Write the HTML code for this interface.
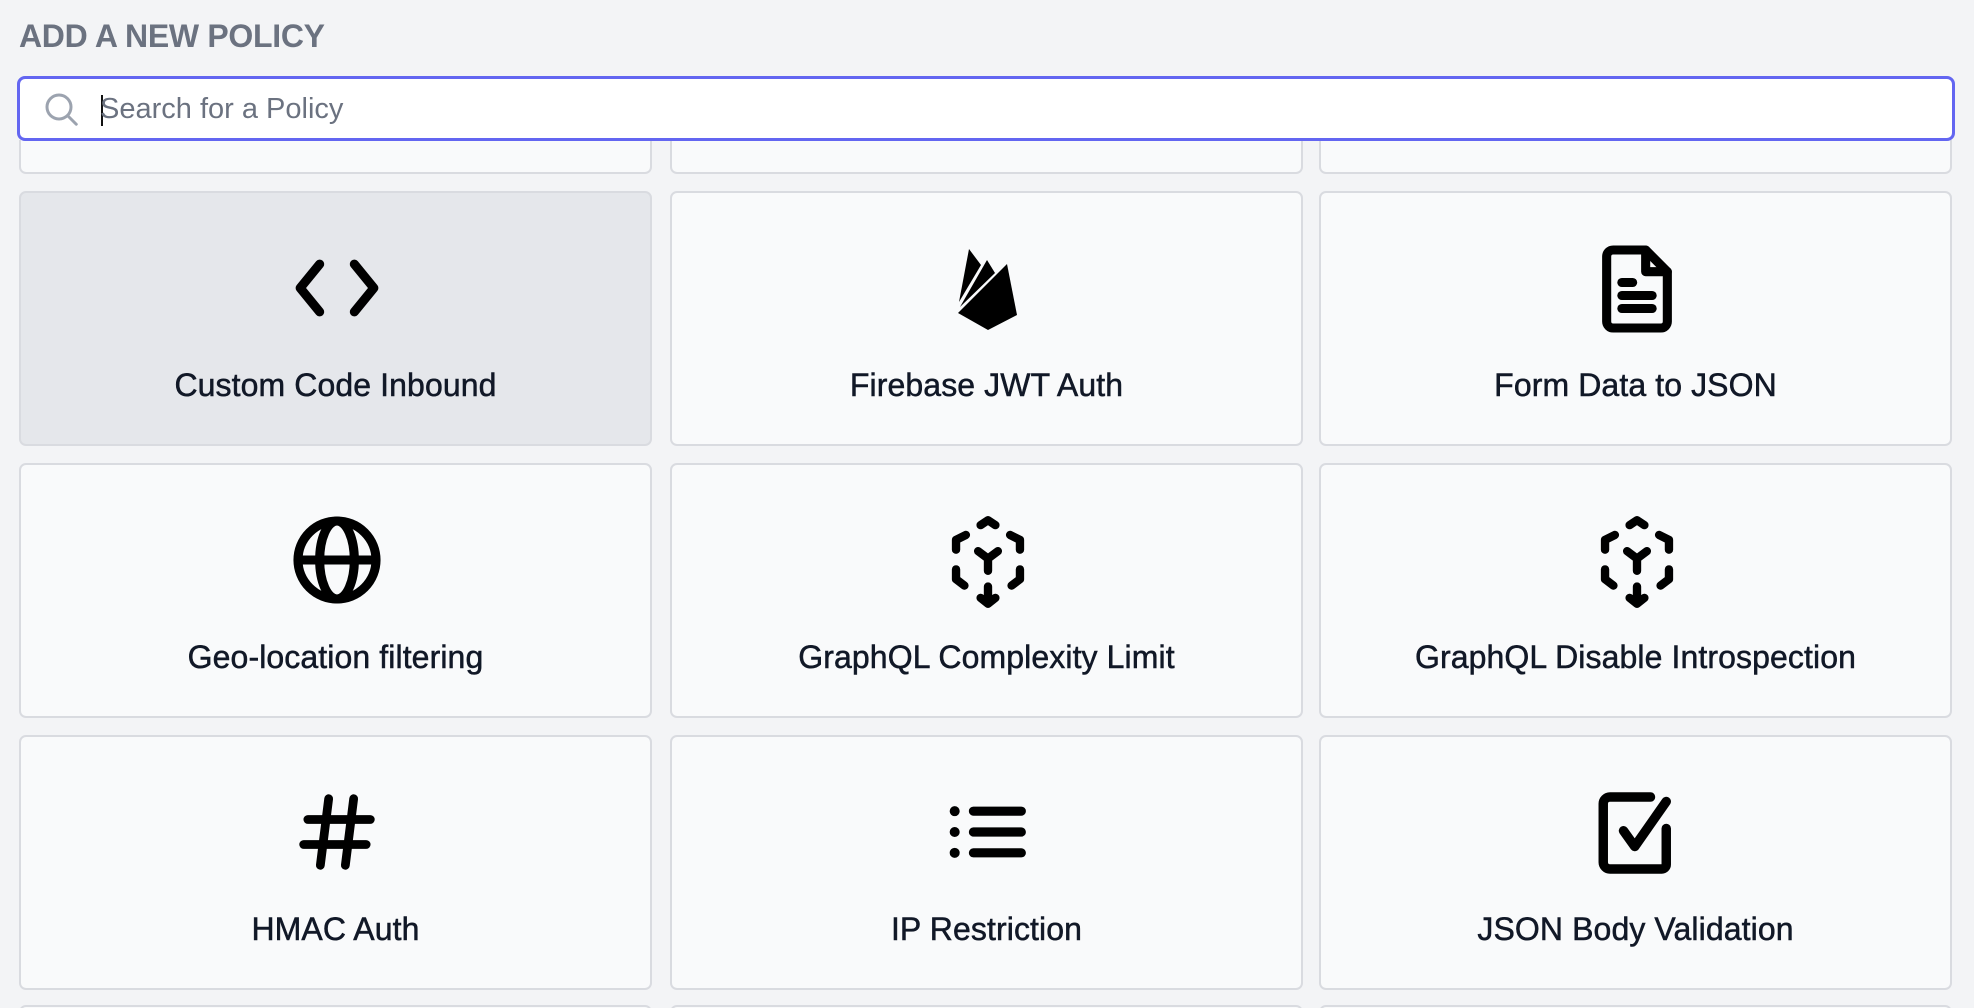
<!DOCTYPE html>
<html><head><meta charset="utf-8"><style>
*{box-sizing:border-box;margin:0;padding:0}
html,body{width:1974px;height:1008px;overflow:hidden}
body{background:#f3f4f6;font-family:"Liberation Sans",sans-serif;position:relative}
h1{position:absolute;left:19px;top:18px;font-size:32px;font-weight:700;color:#6b7280;letter-spacing:-0.3px;line-height:36px}
.list{position:absolute;left:0;top:140px;width:1974px;height:868px;overflow:hidden}
.card{position:absolute;width:633px;height:255px;background:#f9fafb;border:2px solid #d9dbe0;border-radius:7px}
.card.h{background:#e5e7eb}
.card svg{position:absolute;left:266px;top:45px;width:100px;height:100px;fill:none;stroke:#000;stroke-width:2.1;stroke-linecap:round;stroke-linejoin:round}
.card .l{position:absolute;left:0;right:0;top:174px;text-align:center;font-size:32px;color:#111827;letter-spacing:0.1px;-webkit-text-stroke:0.5px #111827}
.search{position:absolute;left:17px;top:76px;width:1938px;height:65px;background:#fff;border:3px solid #6366f1;border-radius:8px;z-index:2}
.search .ph{position:absolute;left:80px;top:14px;font-size:29px;color:#6b7280}
.search .cur{position:absolute;left:81px;top:16px;width:2px;height:31px;background:#111}
</style></head><body>
<h1>ADD A NEW POLICY</h1>
<div class="search">
<svg style="position:absolute;left:24px;top:13px" width="36" height="36" viewBox="0 0 24 24" fill="none" stroke="#9ca3af" stroke-width="2" stroke-linecap="round"><circle cx="10" cy="10" r="8"/><path d="M16 16l5.5 5.5"/></svg>
<div class="cur"></div><div class="ph">Search for a Policy</div></div>

<div class="list">
<div class="card" style="left:19px;top:-221px"></div>
<div class="card" style="left:670px;top:-221px"></div>
<div class="card" style="left:1319px;top:-221px"></div>

<div class="card h" style="left:19px;top:51px"><svg viewBox="0 0 24 24" style="width:104px;height:104px;left:264px;top:43px"><path d="M8 6.5L3.5 12L8 17.5M16 6.5L20.5 12L16 17.5"/></svg><div class="l">Custom Code Inbound</div></div>
<div class="card" style="left:670px;top:51px"><svg viewBox="0 0 100 100" style="stroke:none;fill:#000"><path d="M21 64L31 11L43 27Z"/><path d="M22 69L49 22L57 35Z"/><path d="M20 75L69 26L79 77L50 92Z"/></svg><div class="l">Firebase JWT Auth</div></div>
<div class="card" style="left:1319px;top:51px"><svg viewBox="0 0 24 24" style="width:104px;height:104px;left:264px;top:44px"><path d="M6.5 3H14L19 8V19.5A1.5 1.5 0 0 1 17.5 21H6.5A1.5 1.5 0 0 1 5 19.5V4.5A1.5 1.5 0 0 1 6.5 3Z"/><path d="M14 3V8H19M8.5 10.5H11M8.5 13.5H15.5M8.5 16.5H15.5"/></svg><div class="l">Form Data to JSON</div></div>

<div class="card" style="left:19px;top:323px"><svg viewBox="0 0 24 24" style="width:104px;height:104px;left:264px;top:43px"><circle cx="12" cy="12" r="9"/><ellipse cx="12" cy="12" rx="4" ry="9"/><path d="M3 12H21"/></svg><div class="l">Geo-location filtering</div></div>
<div class="card" style="left:670px;top:323px"><svg viewBox="0 0 24 24" style="width:118px;height:118px;left:257px;top:38px;stroke-width:1.7"><path d="M10.5 4.5L12 3.5L13.5 4.5M16.5 6.5L18.5 7.5V9.5M18.5 13.5V15.5L16.8 16.8M5.5 9.5V7.5L7.5 6.5M5.5 13.5V15.5L7.2 16.8M12 17V20.5M10.5 19.3L12 20.5L13.5 19.3M10 9.8L12 11.3L14 9.8M12 11.3V13.8"/></svg><div class="l">GraphQL Complexity Limit</div></div>
<div class="card" style="left:1319px;top:323px"><svg viewBox="0 0 24 24" style="width:118px;height:118px;left:257px;top:38px;stroke-width:1.7"><path d="M10.5 4.5L12 3.5L13.5 4.5M16.5 6.5L18.5 7.5V9.5M18.5 13.5V15.5L16.8 16.8M5.5 9.5V7.5L7.5 6.5M5.5 13.5V15.5L7.2 16.8M12 17V20.5M10.5 19.3L12 20.5L13.5 19.3M10 9.8L12 11.3L14 9.8M12 11.3V13.8"/></svg><div class="l">GraphQL Disable Introspection</div></div>

<div class="card" style="left:19px;top:595px"><svg viewBox="0 0 24 24"><path d="M5 9H20M4 15H19M10 4L8 20M16 4L14 20"/></svg><div class="l">HMAC Auth</div></div>
<div class="card" style="left:670px;top:595px"><svg viewBox="0 0 24 24"><path d="M8.5 7H20M8.5 12H20M8.5 17H20" stroke-width="2.2"/><path d="M4 7H4.01M4 12H4.01M4 17H4.01" stroke-width="2.4"/></svg><div class="l">IP Restriction</div></div>
<div class="card" style="left:1319px;top:595px"><svg viewBox="0 0 24 24" style="width:108px;height:108px;left:262px;top:42px"><path d="M15 4H6A1.5 1.5 0 0 0 4.5 5.5V18.5A1.5 1.5 0 0 0 6 20H17.5A1 1 0 0 0 18.5 19V11"/><path d="M9 11.5L11.5 15L18.5 5"/></svg><div class="l">JSON Body Validation</div></div>

<div class="card" style="left:19px;top:865px"></div>
<div class="card" style="left:670px;top:865px"></div>
<div class="card" style="left:1319px;top:865px"></div>
</div>
</body></html>
